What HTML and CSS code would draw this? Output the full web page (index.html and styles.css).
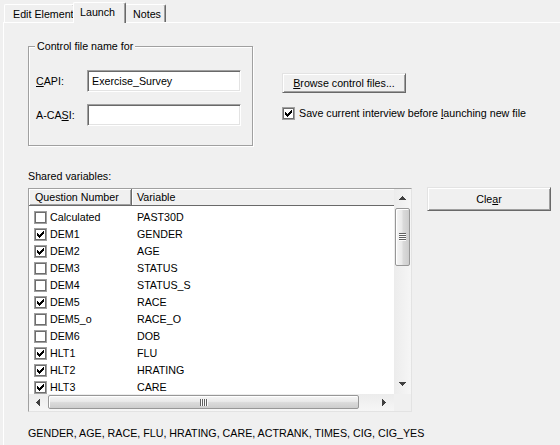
FILE: index.html
```html
<!DOCTYPE html>
<html>
<head>
<meta charset="utf-8">
<link rel="stylesheet" href="styles.css">
</head>
<body>
<svg class="defs" width="0" height="0">
  <defs>
    <symbol id="chk" viewBox="0 0 9 9">
      <path d="M7 1h1v1h-1z M6 2h2v1h-2z M1 3h1v1h-1z M5 3h3v1h-3z M1 4h2v1h-2z M4 4h3v1h-3z M1 5h5v1h-5z M2 6h3v1h-3z M3 7h1v1h-1z" fill="#000"/>
    </symbol>
  </defs>
</svg>
<div class="tabs">
  <div class="tab tab-edit">Edit Element</div>
  <div class="tab tab-launch">Launch</div>
  <div class="tab tab-notes">Notes</div>
</div>
<div class="panel">
  <div class="top-row">
    <fieldset class="group">
      <legend>Control file name for</legend>
      <div class="fields">
        <div class="field"><span class="flabel"><u>C</u>API:</span><div class="input">Exercise_Survey</div></div>
        <div class="field"><span class="flabel">A-CA<u>S</u>I:</span><div class="input"></div></div>
      </div>
    </fieldset>
    <div class="right-col">
      <button class="btn btn-browse"><u>B</u>rowse control files...</button>
      <div class="check-row">
        <span class="cb"><svg width="9" height="9"><use href="#chk"/></svg></span>
        <span>Save current interview before <u>l</u>aunching new file</span>
      </div>
    </div>
  </div>
  <div class="shared-label">Shared variables:</div>
  <div class="mid-row">
    <div class="list">
      <div class="list-main">
        <div class="lv-header">
          <div class="hcell hcell-q">Question Number</div>
          <div class="hcell hcell-v">Variable</div>
        </div>
        <div class="lv-body">
          <div class="row"><span class="cb"></span><span class="q">Calculated</span><span class="v">PAST30D</span></div>
          <div class="row"><span class="cb"><svg width="9" height="9"><use href="#chk"/></svg></span><span class="q">DEM1</span><span class="v">GENDER</span></div>
          <div class="row"><span class="cb"><svg width="9" height="9"><use href="#chk"/></svg></span><span class="q">DEM2</span><span class="v">AGE</span></div>
          <div class="row"><span class="cb"></span><span class="q">DEM3</span><span class="v">STATUS</span></div>
          <div class="row"><span class="cb"></span><span class="q">DEM4</span><span class="v">STATUS_S</span></div>
          <div class="row"><span class="cb"><svg width="9" height="9"><use href="#chk"/></svg></span><span class="q">DEM5</span><span class="v">RACE</span></div>
          <div class="row"><span class="cb"></span><span class="q">DEM5_o</span><span class="v">RACE_O</span></div>
          <div class="row"><span class="cb"></span><span class="q">DEM6</span><span class="v">DOB</span></div>
          <div class="row"><span class="cb"><svg width="9" height="9"><use href="#chk"/></svg></span><span class="q">HLT1</span><span class="v">FLU</span></div>
          <div class="row"><span class="cb"><svg width="9" height="9"><use href="#chk"/></svg></span><span class="q">HLT2</span><span class="v">HRATING</span></div>
          <div class="row"><span class="cb"><svg width="9" height="9"><use href="#chk"/></svg></span><span class="q">HLT3</span><span class="v">CARE</span></div>
        </div>
      </div>
      <div class="vscroll">
        <div class="arrow arrow-up"><svg width="7" height="4" viewBox="0 0 7 4"><path d="M3 0h1v1h-1z M2 1h3v1h-3z M1 2h5v1h-5z M0 3h7v1h-7z" fill="#404040"/></svg></div>
        <div class="thumb thumb-v"><span class="grip grip-v"></span></div>
        <div class="track"></div>
        <div class="arrow arrow-down"><svg width="7" height="4" viewBox="0 0 7 4"><path d="M0 0h7v1h-7z M1 1h5v1h-5z M2 2h3v1h-3z M3 3h1v1h-1z" fill="#404040"/></svg></div>
      </div>
      <div class="hscroll">
        <div class="arrow arrow-left"><svg width="4" height="7" viewBox="0 0 4 7"><path d="M0 3h1v1h-1z M1 2h1v3h-1z M2 1h1v5h-1z M3 0h1v7h-1z" fill="#404040"/></svg></div>
        <div class="thumb thumb-h"><span class="grip grip-h"></span></div>
        <div class="track"></div>
        <div class="arrow arrow-right"><svg width="4" height="7" viewBox="0 0 4 7"><path d="M0 0h1v7h-1z M1 1h1v5h-1z M2 2h1v3h-1z M3 3h1v1h-1z" fill="#404040"/></svg></div>
      </div>
      <div class="corner"></div>
    </div>
    <button class="btn btn-clear">Cle<u>a</u>r</button>
  </div>
  <div class="summary">GENDER, AGE, RACE, FLU, HRATING, CARE, ACTRANK, TIMES, CIG, CIG_YES</div>
</div>
</body>
</html>
```
FILE: styles.css
```css
* { box-sizing: border-box; }
html, body { margin: 0; padding: 0; }
body {
  width: 560px;
  height: 445px;
  overflow: hidden;
  background: #f0f0f0;
  color: #000;
  font-family: "Liberation Sans", Arial, sans-serif;
  font-size: 10.7px;
  line-height: 13px;
}
.defs { position: absolute; width: 0; height: 0; }
u { text-underline-offset: 1px; }

/* Tabs */
.tabs {
  display: flex;
  align-items: flex-end;
  height: 22px;
  padding-left: 4px;
  position: relative;
  z-index: 1;
}
.tab {
  height: 18px;
  background: #f0f0f0;
  border-top: 1px solid #fff;
  border-left: 1px solid #fff;
  border-right: 1px solid #696969;
  border-radius: 2px 2px 0 0;
  box-shadow: inset -1px 0 0 #a0a0a0;
  padding: 3px 0 0 8px;
  white-space: nowrap;
  overflow: hidden;
}
.tab-edit { width: 71px; margin-right: -2px; }
.tab-launch {
  width: 53px;
  height: 21px;
  margin-bottom: -1px;
  padding-left: 6px;
  position: relative;
  z-index: 2;
}
.tab-notes { width: 42px; margin-left: -2px; }

/* Panel */
.panel {
  margin-left: 3px;
  height: 423px;
  border-top: 1px solid #fff;
  border-left: 1px solid #fff;
  padding: 17px 0 0 24px;
}
.top-row { display: flex; align-items: flex-start; }

.group {
  margin: 0;
  padding: 0 0 19px 0;
  width: 225px;
  min-width: 0;
  border: 1px solid #a0a0a0;
  box-shadow: inset 1px 1px 0 #fff, 1px 1px 0 #fff;
}
.group legend {
  margin-left: 6px;
  padding: 0 2px;
  line-height: 13px;
  background: #f0f0f0;
}
.fields {
  display: flex;
  flex-direction: column;
  gap: 12px;
  padding: 17px 0 0 7px;
}
.field { display: flex; align-items: center; height: 22px; }
.flabel { width: 51px; }
.input {
  width: 154px;
  height: 22px;
  background: #fff;
  border: 1px solid;
  border-color: #a0a0a0 #fff #fff #a0a0a0;
  box-shadow: inset 1px 1px 0 #696969, inset -1px -1px 0 #e3e3e3;
  padding-left: 4px;
  line-height: 20px;
}

.right-col { margin-left: 29px; padding-top: 33px; }
.btn {
  display: block;
  width: 124px;
  height: 20px;
  margin: 0;
  padding: 0;
  font: inherit;
  color: #000;
  background: #f0f0f0;
  border: 1px solid;
  border-color: #e3e3e3 #696969 #696969 #e3e3e3;
  box-shadow: inset 1px 1px 0 #fff, inset -1px -1px 0 #a0a0a0;
  text-align: center;
}
.check-row {
  display: flex;
  align-items: center;
  gap: 4px;
  margin-top: 14px;
  height: 13px;
}
.cb {
  display: flex;
  flex: none;
  width: 13px;
  height: 13px;
  padding: 1px;
  background: #fff;
  border: 1px solid #a0a0a0;
  box-shadow: inset 0 0 0 1px #6d6d6d;
}
.cb svg { display: block; }

.shared-label { margin-top: 24px; }

.mid-row { display: flex; align-items: flex-start; margin-top: 4px; }
.list {
  margin-top: 1px;
  width: 384px;
  height: 224px;
  border: 1px solid;
  border-color: #a0a0a0 #e3e3e3 #e3e3e3 #a0a0a0;
  display: grid;
  grid-template-columns: 365px 17px;
  grid-template-rows: 205px 17px;
}
.list-main { background: #fff; overflow: hidden; }
.lv-header { display: flex; height: 17px; }
.hcell {
  height: 17px;
  line-height: 16px;
  background: #f0f0f0;
  border-bottom: 1px solid #696969;
  box-shadow: inset 1px 1px 0 #fff;
}
.hcell-q {
  width: 103px;
  padding-left: 6px;
  border-right: 1px solid #696969;
  box-shadow: inset 1px 1px 0 #fff, inset -1px -1px 0 #a0a0a0;
}
.hcell-v { flex: 1; padding-left: 5px; }
.lv-body { padding-top: 3px; }
.row { display: flex; align-items: center; height: 17px; white-space: nowrap; }
.row .cb { margin-left: 5px; }
.q { width: 87px; margin-left: 3px; }

.vscroll {
  display: flex;
  flex-direction: column;
  background: linear-gradient(to right, #ececec, #f6f6f6);
}
.hscroll {
  display: flex;
  background: linear-gradient(to bottom, #ececec, #f6f6f6);
}
.corner { background: #f0f0f0; }
.track { flex: 1; }
.arrow { display: flex; align-items: center; justify-content: center; flex: none; }
.arrow svg { display: block; }
.arrow-up { height: 17px; }
.arrow-down { height: 17px; padding-bottom: 4px; }
.arrow-left { width: 17px; }
.arrow-right { width: 17px; padding-right: 4px; }
.thumb {
  display: flex;
  align-items: center;
  justify-content: center;
  flex: none;
  border: 1px solid #979797;
  border-radius: 2px;
}
.thumb-v {
  margin: 2px 1px 0 1px;
  height: 58px;
  background: linear-gradient(to right, #f6f6f6, #e9e9e9 45%, #dadada 55%, #cdcdcd);
  box-shadow: inset 1px 1px 0 #fff;
}
.thumb-h {
  margin: 1px 0 2px 2px;
  width: 311px;
  background: linear-gradient(to bottom, #f6f6f6, #e9e9e9 45%, #dadada 55%, #cdcdcd);
  box-shadow: inset 1px 1px 0 #fff;
}
.grip { display: block; }
.grip-v {
  width: 7px;
  height: 8px;
  background: repeating-linear-gradient(to bottom, #606060 0 1px, #fbfbfb 1px 2px);
}
.grip-h {
  width: 8px;
  height: 7px;
  background: repeating-linear-gradient(to right, #606060 0 1px, #fbfbfb 1px 2px);
}

.btn-clear { height: 24px; margin-left: 15px; }

.summary { margin-top: 15px; white-space: nowrap; }
```
